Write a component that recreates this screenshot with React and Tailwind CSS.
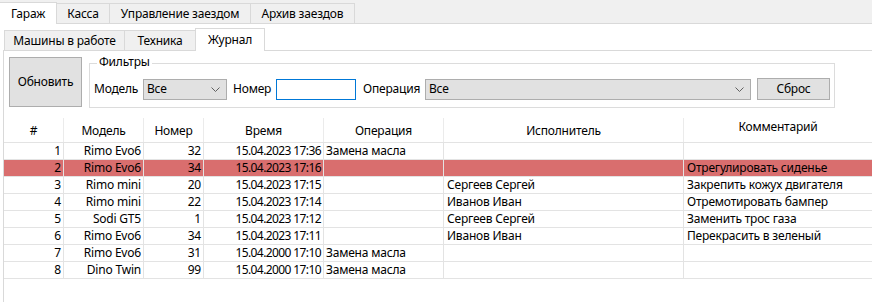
import React from 'react';

const mainTabs = [
  { name: 'Гараж', w: 'w-[57px]', active: true },
  { name: 'Касса', w: 'w-[53px]' },
  { name: 'Управление заездом', w: 'w-[141px]' },
  { name: 'Архив заездов', w: 'w-[104px]' },
];

const cols = [
  { title: '#', w: 'w-[60px]', align: 'text-right pr-[2px]' },
  { title: 'Модель', w: 'w-[80px]', align: 'text-right pr-[2px]' },
  { title: 'Номер', w: 'w-[60px]', align: 'text-right pr-[2px]' },
  { title: 'Время', w: 'w-[120px]', align: 'text-right pr-[2px] tracking-[-0.6px]' },
  { title: 'Операция', w: 'w-[120px]', align: 'text-left pl-[2px]' },
  { title: 'Исполнитель', w: 'w-[240px]', align: 'text-left pl-[3px]' },
  { title: 'Комментарий', w: 'flex-1', align: 'text-left pl-[3px]' },
];

const rows = [
  ['1', 'Rimo Evo6', '32', '15.04.2023 17:36', 'Замена масла', '', ''],
  ['2', 'Rimo Evo6', '34', '15.04.2023 17:16', '', '', 'Отрегулировать сиденье'],
  ['3', 'Rimo mini', '20', '15.04.2023 17:15', '', 'Сергеев Сергей', 'Закрепить кожух двигателя'],
  ['4', 'Rimo mini', '22', '15.04.2023 17:14', '', 'Иванов Иван', 'Отремотировать бампер'],
  ['5', 'Sodi GT5', '1', '15.04.2023 17:12', '', 'Сергеев Сергей', 'Заменить трос газа'],
  ['6', 'Rimo Evo6', '34', '15.04.2023 17:11', '', 'Иванов Иван', 'Перекрасить в зеленый'],
  ['7', 'Rimo Evo6', '31', '15.04.2000 17:10', 'Замена масла', '', ''],
  ['8', 'Dino Twin', '99', '15.04.2000 17:10', 'Замена масла', '', ''],
];

function Chevron() {
  return (
    <svg width="9" height="5" viewBox="0 0 9 5" className="shrink-0">
      <polyline points="0.5,0.5 4.5,4.5 8.5,0.5" fill="none" stroke="#606060" strokeWidth="1" />
    </svg>
  );
}

function Combo({ w, value }) {
  return (
    <div className={`${w} h-[21px] bg-[#e1e1e1] border border-[#adadad] flex items-center justify-between pl-[3px] pr-[6px]`}>
      <span>{value}</span>
      <Chevron />
    </div>
  );
}

export default function App() {
  return (
    <div className="w-[872px] h-[302px] overflow-hidden bg-white text-black text-[12px] leading-[16px] tracking-[-0.2px] font-['Noto_Sans',sans-serif]">
      {/* main tabs */}
      <div className="flex items-end h-[24px] bg-[#f0f0f0]">
        {mainTabs.map((t) =>
          t.active ? (
            <div key={t.name} className={`${t.w} h-[22px] bg-white border-t border-r border-[#d9d9d9] flex items-center justify-center`}>
              {t.name}
            </div>
          ) : (
            <div key={t.name} className={`${t.w} h-[21px] bg-[#f0f0f0] border-t border-r border-b border-[#d9d9d9] flex items-center justify-center`}>
              {t.name}
            </div>
          )
        )}
        <div className="flex-1 h-full border-b border-[#d9d9d9]" />
      </div>

      <div className="pl-[3px]">
        {/* sub tabs */}
        <div className="flex items-end h-[27px]">
          <div className="w-px h-full border-b border-[#d9d9d9]" />
          <div className="w-[120px] h-[21px] bg-[#f0f0f0] border-l border-t border-b border-[#d9d9d9] flex items-center justify-center">
            Машины в работе
          </div>
          <div className="w-[71px] h-[21px] bg-[#f0f0f0] border-l border-t border-b border-[#d9d9d9] flex items-center justify-center">
            Техника
          </div>
          <div className="w-[70px] h-[23px] bg-white border-l border-r border-t border-[#d9d9d9] flex items-center justify-center">
            Журнал
          </div>
          <div className="flex-1 h-full border-b border-[#d9d9d9]" />
        </div>

        {/* page */}
        <div className="border-l border-[#d9d9d9] h-[260px]">
          <div className="flex items-start pl-[5px] pt-[6px]">
            <div className="w-[73px] h-[50px] bg-[#e1e1e1] border border-[#adadad] flex items-center justify-center">
              Обновить
            </div>
            <div className="relative ml-[7px] mt-[6px] w-[746px] h-[45px] border border-[#dcdcdc]">
              <span className="absolute left-[7px] top-[-10px] bg-white px-[2px]">Фильтры</span>
              <div className="flex items-center h-[22px] mt-[14px] pl-[4px]">
                <span className="w-[49px]">Модель</span>
                <Combo w="w-[84px]" value="Все" />
                <span className="w-[43px] ml-[6px]">Номер</span>
                <div className="w-[80px] h-[21px] bg-white border border-[#0078d7]" />
                <span className="w-[62px] ml-[7px]">Операция</span>
                <Combo w="w-[326px]" value="Все" />
                <div className="ml-[6px] w-[73px] h-[22px] bg-[#e1e1e1] border border-[#adadad] flex items-center justify-center">
                  Сброс
                </div>
              </div>
            </div>
          </div>

          {/* grid */}
          <div className="mt-[10px]">
            <div className="flex h-[25px] border-b border-[#e3e3e3]">
              {cols.map((c, i) => (
                <div
                  key={c.title}
                  className={`${c.w} ${i < cols.length - 1 ? 'border-r border-[#ebebeb] pt-[5px]' : 'pt-[1px]'} text-center`}
                >
                  {c.title}
                </div>
              ))}
            </div>
            {rows.map((r, ri) => (
              <div
                key={ri}
                className={`flex h-[17px] border-b border-[#e3e3e3] ${ri === 1 ? 'bg-[#d96e6e]' : 'bg-white'}`}
              >
                {r.map((v, ci) => (
                  <div
                    key={ci}
                    className={`${cols[ci].w} ${cols[ci].align} ${ci < cols.length - 1 ? 'border-r border-[#e3e3e3]' : ''} whitespace-nowrap overflow-hidden leading-[16px]`}
                  >
                    {v}
                  </div>
                ))}
              </div>
            ))}
          </div>
        </div>
      </div>
    </div>
  );
}
